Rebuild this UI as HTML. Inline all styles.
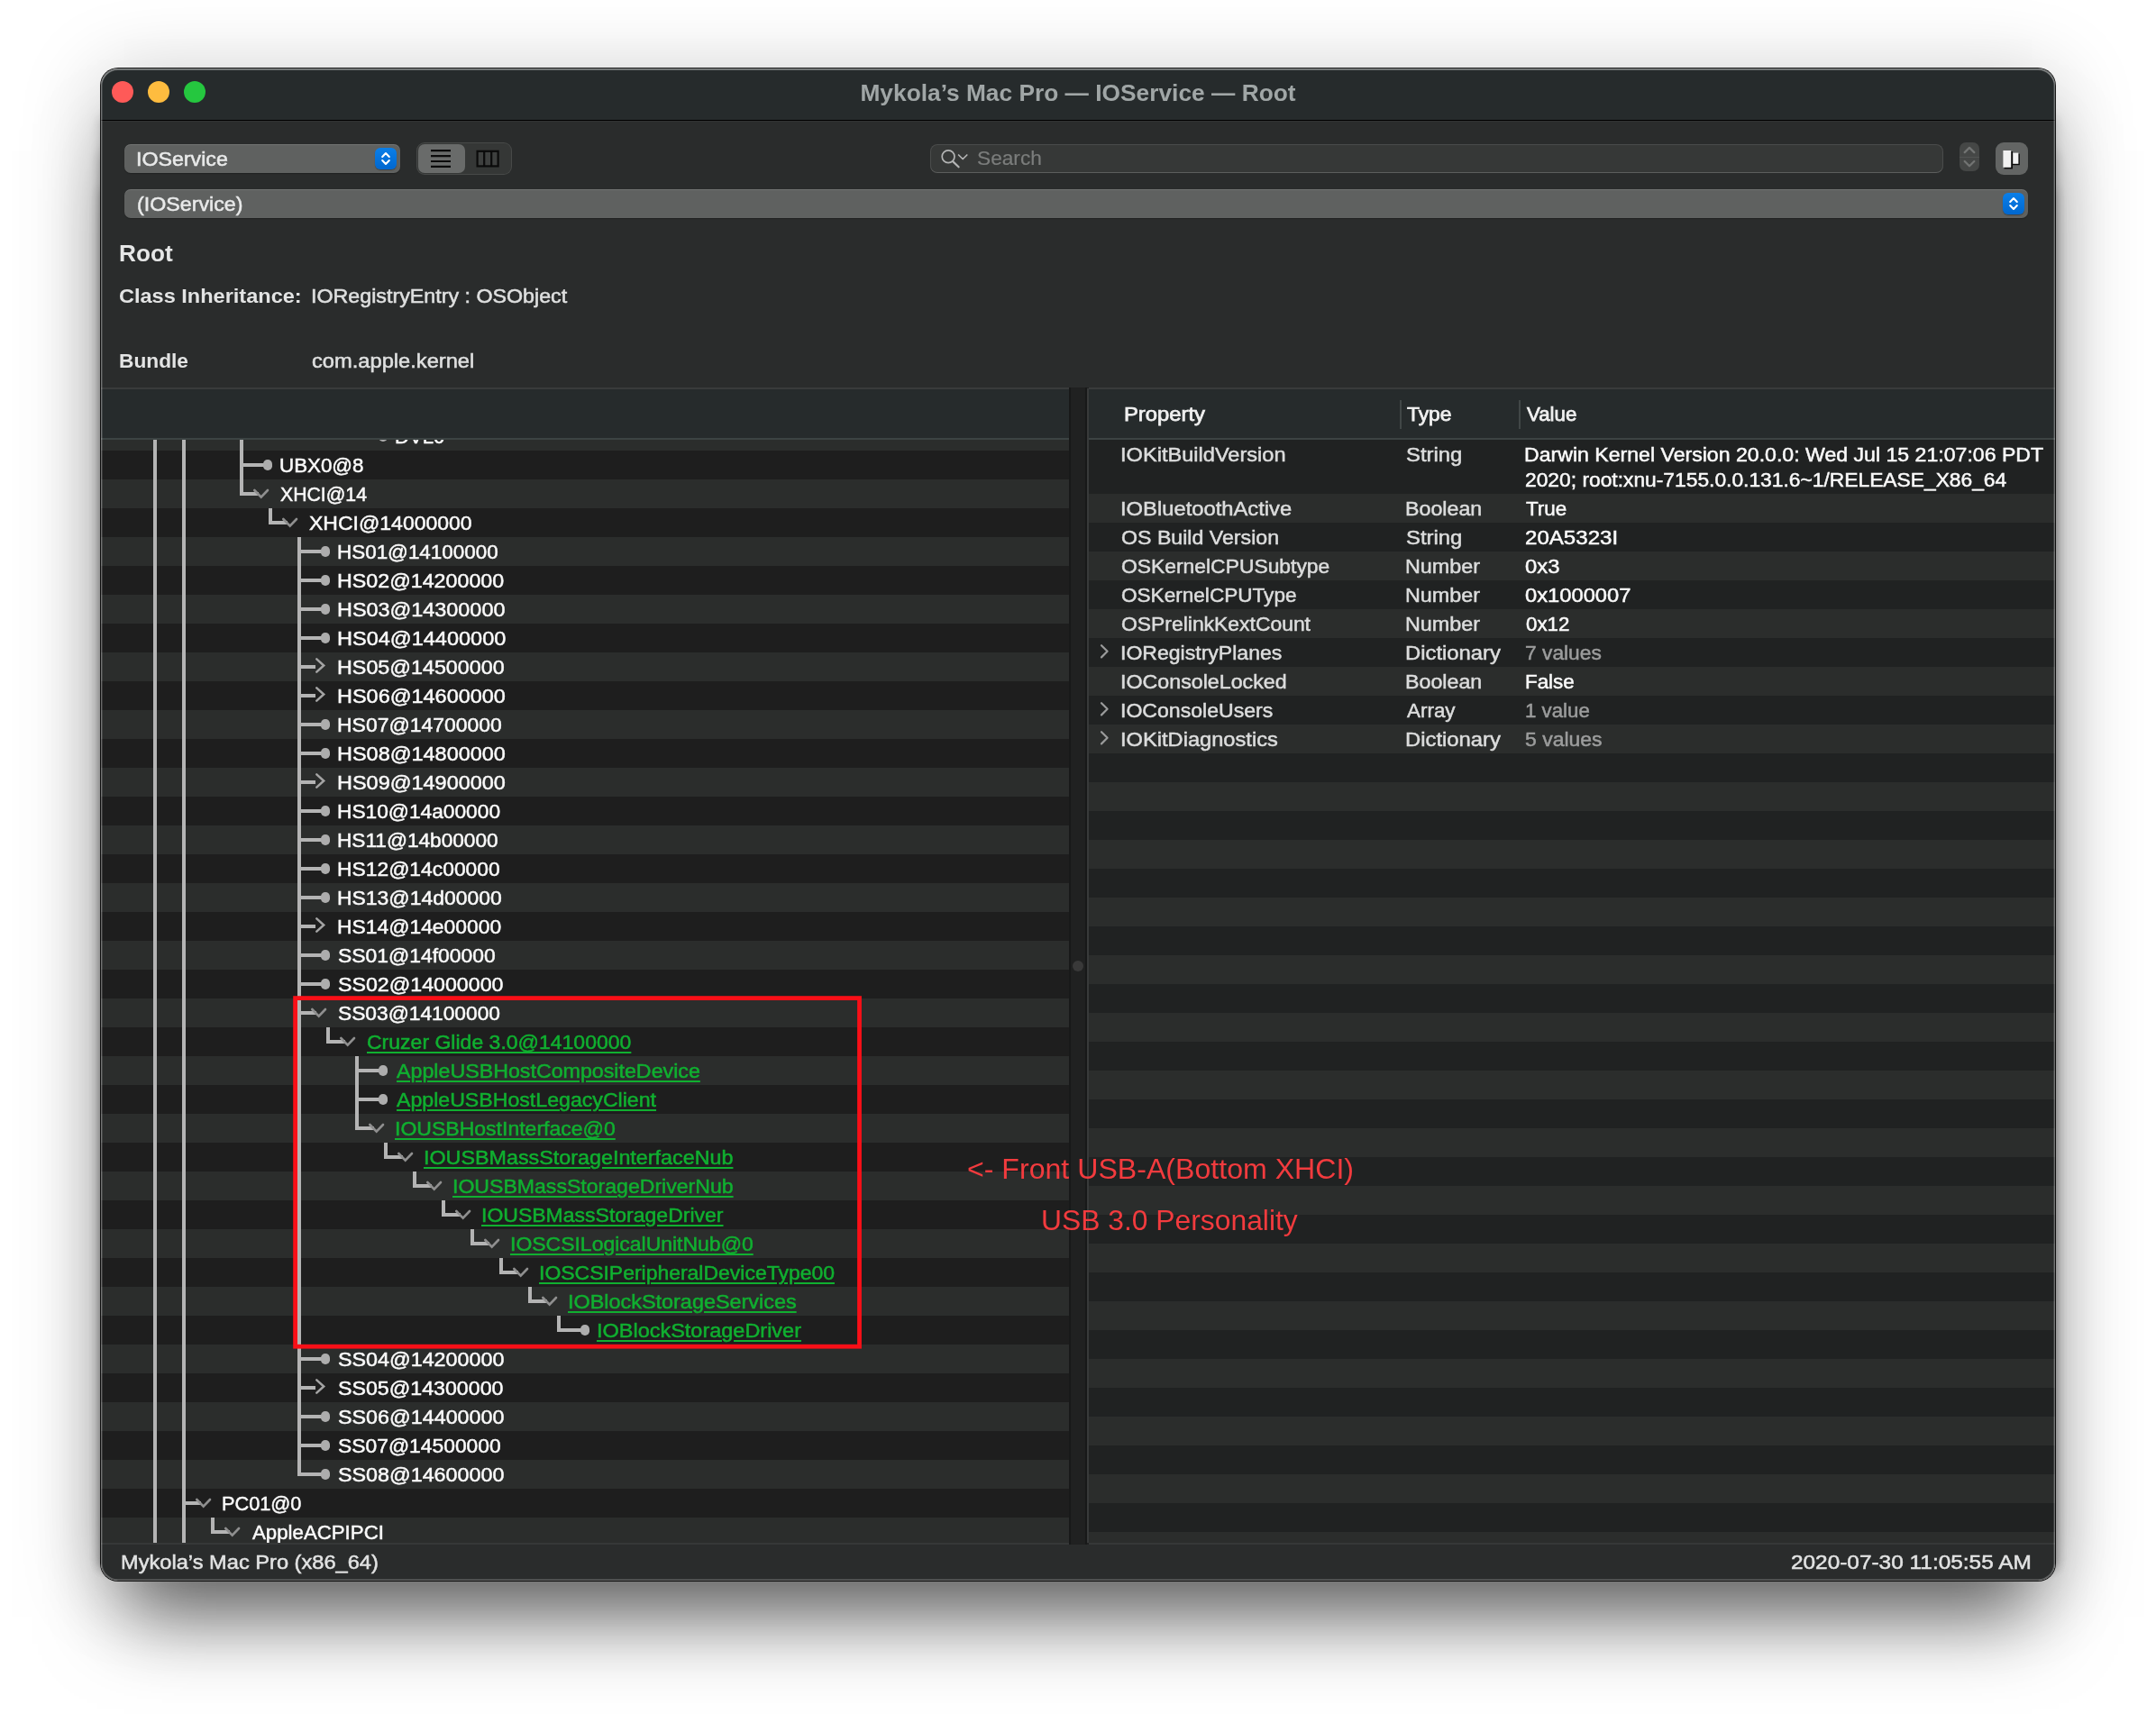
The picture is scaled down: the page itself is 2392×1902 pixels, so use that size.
<!DOCTYPE html><html lang="en"><head><meta charset="utf-8"><title>Mykola’s Mac Pro — IOService — Root</title><style>
*{box-sizing:border-box;margin:0;padding:0}
html,body{width:2392px;height:1902px;background:#fff;overflow:hidden}
body{position:relative;font-family:"Liberation Sans", Arial, Helvetica, sans-serif;color:#e4e5e5;font-size:22px}
.a{position:absolute}
.t{position:absolute;white-space:nowrap;line-height:32px;height:32px;transform-origin:0 50%;-webkit-text-stroke:.5px currentColor}
#shadow{position:absolute;left:112px;top:76px;width:2168px;height:1678px;border-radius:19px;
 box-shadow:0 0 0 1px rgba(0,0,0,.9),0 66px 84px -26px rgba(0,0,0,.565),0 10px 90px rgba(0,0,0,.22)}
#win{position:absolute;left:112px;top:76px;width:2168px;height:1678px;border-radius:19px;overflow:hidden;background:#2a2c2c}
#c{position:absolute;left:-112px;top:-76px;width:2392px;height:1902px;will-change:transform}
#rim{position:absolute;left:112px;top:76px;width:2168px;height:1678px;border-radius:19px;
 box-shadow:inset 0 0 0 1.5px rgba(255,255,255,.26), inset 0 1.5px 0 0.5px rgba(255,255,255,.22)}
.ln{position:absolute;background:#b4b4b4}
.dot{position:absolute;width:10.4px;height:11.6px;border-radius:4.8px;background:#adadad}
.g{color:#10b030;text-decoration:underline;text-decoration-thickness:2.2px;text-underline-offset:2.6px}
.rowd{position:absolute;height:32px}
svg{position:absolute;overflow:visible}
</style></head><body>
<div id="shadow"></div>
<div class="a" style="left:112px;top:130px;width:2168px;height:1610px;box-shadow:0 0 12px rgba(0,0,0,.2)"></div>
<div class="a" style="left:112px;top:170px;width:2168px;height:1570px;box-shadow:0 0 12px rgba(0,0,0,.2)"></div>
<div class="a" style="left:112px;top:210px;width:2168px;height:1530px;box-shadow:0 0 12px rgba(0,0,0,.2)"></div>
<div id="win"><div id="c">
<div class="a" style="left:112px;top:76px;width:2168px;height:57px;background:#262b2c"></div>
<div class="a" style="left:112px;top:132.8px;width:2168px;height:1.4px;background:#000"></div>
<div class="a" style="left:112px;top:134.2px;width:2168px;height:1px;background:#303232"></div>
<div class="a" style="left:124px;top:90px;width:24px;height:24px;border-radius:50%;background:#fe5a58"></div>
<div class="a" style="left:164px;top:90px;width:24px;height:24px;border-radius:50%;background:#febc3f"></div>
<div class="a" style="left:204px;top:90px;width:24px;height:24px;border-radius:50%;background:#25c73f"></div>
<div class="t" style="left:112.0px;top:86.99px;font-size:26px;font-weight:bold;color:#a0a6a6;transform:scaleX(1.0122);width:2168px;text-align:center;transform-origin:50% 50%;-webkit-text-stroke:0;">Mykola’s Mac Pro — IOService — Root</div>
<div class="a" style="left:138px;top:160px;width:306px;height:32px;border-radius:7px;background:#5f6160;box-shadow:inset 0 1px 0 rgba(255,255,255,.12),0 1px 1px rgba(0,0,0,.25)"></div>
<div class="t" style="left:151.3px;top:160.78px;color:#e9eaea;transform:scaleX(1.0542);">IOService</div>
<div class="a" style="left:416px;top:164px;width:24px;height:24px;border-radius:6px;background:linear-gradient(#0b7fe8,#0067cf);box-shadow:0 1px 1px rgba(0,0,0,.3)"></div>
<svg style="left:416px;top:164px" width="24" height="24" viewBox="0 0 24 24"><path d="M8.2 9.9L12 6.1L15.8 9.9M8.2 14.1L12 17.9L15.8 14.1" fill="none" stroke="#fff" stroke-width="2.1" stroke-linecap="round" stroke-linejoin="round"/></svg>
<div class="a" style="left:138px;top:210px;width:2112px;height:32px;border-radius:7px;background:#5f6160;box-shadow:inset 0 1px 0 rgba(255,255,255,.12),0 1px 1px rgba(0,0,0,.25)"></div>
<div class="t" style="left:152.0px;top:210.78px;color:#e9eaea;transform:scaleX(1.0555);">(IOService)</div>
<div class="a" style="left:2222px;top:214px;width:24px;height:24px;border-radius:6px;background:linear-gradient(#0b7fe8,#0067cf);box-shadow:0 1px 1px rgba(0,0,0,.3)"></div>
<svg style="left:2222px;top:214px" width="24" height="24" viewBox="0 0 24 24"><path d="M8.2 9.9L12 6.1L15.8 9.9M8.2 14.1L12 17.9L15.8 14.1" fill="none" stroke="#fff" stroke-width="2.1" stroke-linecap="round" stroke-linejoin="round"/></svg>
<div class="a" style="left:462px;top:158px;width:106px;height:36px;border-radius:9px;background:#353736;box-shadow:inset 0 0 0 1px rgba(255,255,255,.09)"></div>
<div class="a" style="left:464px;top:160px;width:52px;height:32px;border-radius:7px;background:#696b6a"></div>
<svg style="left:462px;top:158px" width="106" height="36" viewBox="0 0 106 36"><g stroke="#0b0b0b" stroke-width="2.2" fill="none"><path d="M16 9.2H38M16 15.1H38M16 21H38M16 26.9H38"/><rect x="67.6" y="9.8" width="23" height="16.6" fill="#3e403f"/><path d="M75.2 9.8V26.4M83.2 9.8V26.4"/></g></svg>
<div class="a" style="left:1032px;top:160px;width:1124px;height:32px;border-radius:8px;background:#363837;box-shadow:inset 0 0 0 1px rgba(255,255,255,.10),inset 0 -1px 0 rgba(255,255,255,.10)"></div>
<svg style="left:1032px;top:160px" width="60" height="32" viewBox="0 0 60 32"><g fill="none" stroke="#b3b4b4" stroke-width="1.7" stroke-linecap="round" stroke-linejoin="round"><circle cx="20.1" cy="13.7" r="6.9"/><path d="M25.4 19.4L31.6 25.3" stroke-width="2.2"/><path d="M31.6 12L36.2 16.5L40.8 12"/></g></svg>
<div class="t" style="left:1084.4px;top:160.38px;color:#7b7d7c;transform:scaleX(1.0311);-webkit-text-stroke:.2px currentColor;">Search</div>
<div class="a" style="left:2174px;top:158px;width:22px;height:32px;border-radius:7px;background:#454746"></div>
<div class="a" style="left:2174px;top:173.5px;width:22px;height:1.5px;background:#525453"></div>
<svg style="left:2174px;top:158px" width="22" height="32" viewBox="0 0 22 32"><path d="M5.7 11.1L11 5.9L16.3 11.1M5.7 21L11 26.2L16.3 21" fill="none" stroke="#727473" stroke-width="2.3" stroke-linecap="round" stroke-linejoin="round"/></svg>
<div class="a" style="left:2214px;top:158px;width:36px;height:36px;border-radius:9px;background:#636564"></div>
<svg style="left:2214px;top:158px" width="36" height="36" viewBox="0 0 36 36"><rect x="9.6" y="10" width="9.4" height="19.4" fill="#0a0a0a"/><rect x="19" y="12.6" width="7.8" height="12.6" fill="#0a0a0a"/><rect x="8.4" y="9" width="8.8" height="18.8" fill="#f1f1f1"/><rect x="19.2" y="11.6" width="6.2" height="12.2" fill="#f1f1f1"/></svg>
<div class="t" style="left:131.5px;top:264.79px;font-size:26px;font-weight:bold;color:#e6e7e7;transform:scaleX(1.0070);-webkit-text-stroke:0;">Root</div>
<div class="t" style="left:132.3px;top:313.08px;font-weight:bold;color:#e3e4e4;transform:scaleX(1.0694);-webkit-text-stroke:0;">Class Inheritance:</div>
<div class="t" style="left:345.0px;top:312.88px;color:#dfe0e0;transform:scaleX(1.0564);">IORegistryEntry : OSObject</div>
<div class="t" style="left:131.8px;top:385.08px;font-weight:bold;color:#e3e4e4;transform:scaleX(1.0319);-webkit-text-stroke:0;">Bundle</div>
<div class="t" style="left:346.1px;top:384.88px;color:#dfe0e0;transform:scaleX(1.0761);">com.apple.kernel</div>
<div class="a" style="left:112px;top:430px;width:2168px;height:2px;background:#393b3b"></div>
<div class="a" style="left:112px;top:432px;width:1074px;height:1280px;background:#1e1e1e;overflow:hidden"><div class="a" style="left:-112px;top:-432px;width:2392px;height:1902px">
<div class="rowd" style="left:112px;top:468px;width:1074px;background:#2b2d2c"></div>
<div class="rowd" style="left:112px;top:532px;width:1074px;background:#2b2d2c"></div>
<div class="rowd" style="left:112px;top:596px;width:1074px;background:#2b2d2c"></div>
<div class="rowd" style="left:112px;top:660px;width:1074px;background:#2b2d2c"></div>
<div class="rowd" style="left:112px;top:724px;width:1074px;background:#2b2d2c"></div>
<div class="rowd" style="left:112px;top:788px;width:1074px;background:#2b2d2c"></div>
<div class="rowd" style="left:112px;top:852px;width:1074px;background:#2b2d2c"></div>
<div class="rowd" style="left:112px;top:916px;width:1074px;background:#2b2d2c"></div>
<div class="rowd" style="left:112px;top:980px;width:1074px;background:#2b2d2c"></div>
<div class="rowd" style="left:112px;top:1044px;width:1074px;background:#2b2d2c"></div>
<div class="rowd" style="left:112px;top:1108px;width:1074px;background:#2b2d2c"></div>
<div class="rowd" style="left:112px;top:1172px;width:1074px;background:#2b2d2c"></div>
<div class="rowd" style="left:112px;top:1236px;width:1074px;background:#2b2d2c"></div>
<div class="rowd" style="left:112px;top:1300px;width:1074px;background:#2b2d2c"></div>
<div class="rowd" style="left:112px;top:1364px;width:1074px;background:#2b2d2c"></div>
<div class="rowd" style="left:112px;top:1428px;width:1074px;background:#2b2d2c"></div>
<div class="rowd" style="left:112px;top:1492px;width:1074px;background:#2b2d2c"></div>
<div class="rowd" style="left:112px;top:1556px;width:1074px;background:#2b2d2c"></div>
<div class="rowd" style="left:112px;top:1620px;width:1074px;background:#2b2d2c"></div>
<div class="rowd" style="left:112px;top:1684px;width:1074px;background:#2b2d2c"></div>
<div class="ln" style="left:170px;top:432px;width:4px;height:1280px"></div>
<div class="ln" style="left:202px;top:432px;width:4px;height:1280px"></div>
<div class="ln" style="left:266px;top:432px;width:4px;height:118px"></div>
<div class="ln" style="left:330px;top:596px;width:4px;height:1042px"></div>
<div class="ln" style="left:394px;top:1172px;width:4px;height:82px"></div>
<div class="ln" style="left:394px;top:482px;width:29.69999999999999px;height:4px"></div>
<div class="dot" style="left:419.8px;top:478.2px"></div>
<div class="t" style="left:437.9px;top:469.08px;color:#fafafa;transform:scaleX(1.0025);">DVL0</div>
<div class="ln" style="left:266px;top:514px;width:29.69999999999999px;height:4px"></div>
<div class="dot" style="left:291.8px;top:510.2px"></div>
<div class="t" style="left:310.0px;top:501.08px;color:#fafafa;transform:scaleX(1.0152);">UBX0@8</div>
<div class="ln" style="left:266px;top:546px;width:21.19999999999999px;height:4px"></div>
<svg style="left:276.7px;top:532px" width="24" height="32" viewBox="0 0 24 32"><path d="M5.3 12L12.7 19.7L20 12" fill="none" stroke="#8f8f8f" stroke-width="2.6" stroke-linecap="round" stroke-linejoin="miter"/></svg>
<div class="t" style="left:311.1px;top:533.08px;color:#fafafa;transform:scaleX(0.9661);">XHCI@14</div>
<div class="ln" style="left:298px;top:564px;width:4px;height:18px"></div>
<div class="ln" style="left:298px;top:578px;width:21.19999999999999px;height:4px"></div>
<svg style="left:308.7px;top:564px" width="24" height="32" viewBox="0 0 24 32"><path d="M5.3 12L12.7 19.7L20 12" fill="none" stroke="#8f8f8f" stroke-width="2.6" stroke-linecap="round" stroke-linejoin="miter"/></svg>
<div class="t" style="left:343.1px;top:565.08px;color:#fafafa;transform:scaleX(1.0455);">XHCI@14000000</div>
<div class="ln" style="left:330px;top:610px;width:29.69999999999999px;height:4px"></div>
<div class="dot" style="left:355.8px;top:606.2px"></div>
<div class="t" style="left:373.9px;top:597.08px;color:#fafafa;transform:scaleX(1.0197);">HS01@14100000</div>
<div class="ln" style="left:330px;top:642px;width:29.69999999999999px;height:4px"></div>
<div class="dot" style="left:355.8px;top:638.2px"></div>
<div class="t" style="left:373.8px;top:629.08px;color:#fafafa;transform:scaleX(1.0567);">HS02@14200000</div>
<div class="ln" style="left:330px;top:674px;width:29.69999999999999px;height:4px"></div>
<div class="dot" style="left:355.8px;top:670.2px"></div>
<div class="t" style="left:373.8px;top:661.08px;color:#fafafa;transform:scaleX(1.0637);">HS03@14300000</div>
<div class="ln" style="left:330px;top:706px;width:29.69999999999999px;height:4px"></div>
<div class="dot" style="left:355.8px;top:702.2px"></div>
<div class="t" style="left:373.8px;top:693.08px;color:#fafafa;transform:scaleX(1.0689);">HS04@14400000</div>
<div class="ln" style="left:330px;top:738px;width:20.0px;height:4px"></div>
<svg style="left:344.7px;top:724px" width="20" height="32" viewBox="0 0 20 32"><path d="M6.3 7.4L14.2 14.5L6.3 21.6" fill="none" stroke="#a4a4a4" stroke-width="2.5" stroke-linecap="round" stroke-linejoin="miter"/></svg>
<div class="t" style="left:373.8px;top:725.08px;color:#fafafa;transform:scaleX(1.0596);">HS05@14500000</div>
<div class="ln" style="left:330px;top:770px;width:20.0px;height:4px"></div>
<svg style="left:344.7px;top:756px" width="20" height="32" viewBox="0 0 20 32"><path d="M6.3 7.4L14.2 14.5L6.3 21.6" fill="none" stroke="#a4a4a4" stroke-width="2.5" stroke-linecap="round" stroke-linejoin="miter"/></svg>
<div class="t" style="left:373.8px;top:757.08px;color:#fafafa;transform:scaleX(1.0666);">HS06@14600000</div>
<div class="ln" style="left:330px;top:802px;width:29.69999999999999px;height:4px"></div>
<div class="dot" style="left:355.8px;top:798.2px"></div>
<div class="t" style="left:373.8px;top:789.08px;color:#fafafa;transform:scaleX(1.0434);">HS07@14700000</div>
<div class="ln" style="left:330px;top:834px;width:29.69999999999999px;height:4px"></div>
<div class="dot" style="left:355.8px;top:830.2px"></div>
<div class="t" style="left:373.8px;top:821.08px;color:#fafafa;transform:scaleX(1.0666);">HS08@14800000</div>
<div class="ln" style="left:330px;top:866px;width:20.0px;height:4px"></div>
<svg style="left:344.7px;top:852px" width="20" height="32" viewBox="0 0 20 32"><path d="M6.3 7.4L14.2 14.5L6.3 21.6" fill="none" stroke="#a4a4a4" stroke-width="2.5" stroke-linecap="round" stroke-linejoin="miter"/></svg>
<div class="t" style="left:373.8px;top:853.08px;color:#fafafa;transform:scaleX(1.0666);">HS09@14900000</div>
<div class="ln" style="left:330px;top:898px;width:29.69999999999999px;height:4px"></div>
<div class="dot" style="left:355.8px;top:894.2px"></div>
<div class="t" style="left:373.8px;top:885.08px;color:#fafafa;transform:scaleX(1.0330);">HS10@14a00000</div>
<div class="ln" style="left:330px;top:930px;width:29.69999999999999px;height:4px"></div>
<div class="dot" style="left:355.8px;top:926.2px"></div>
<div class="t" style="left:373.8px;top:917.08px;color:#fafafa;transform:scaleX(1.0289);">HS11@14b00000</div>
<div class="ln" style="left:330px;top:962px;width:29.69999999999999px;height:4px"></div>
<div class="dot" style="left:355.8px;top:958.2px"></div>
<div class="t" style="left:373.8px;top:949.08px;color:#fafafa;transform:scaleX(1.0385);">HS12@14c00000</div>
<div class="ln" style="left:330px;top:994px;width:29.69999999999999px;height:4px"></div>
<div class="dot" style="left:355.8px;top:990.2px"></div>
<div class="t" style="left:373.8px;top:981.08px;color:#fafafa;transform:scaleX(1.0423);">HS13@14d00000</div>
<div class="ln" style="left:330px;top:1026px;width:20.0px;height:4px"></div>
<svg style="left:344.7px;top:1012px" width="20" height="32" viewBox="0 0 20 32"><path d="M6.3 7.4L14.2 14.5L6.3 21.6" fill="none" stroke="#a4a4a4" stroke-width="2.5" stroke-linecap="round" stroke-linejoin="miter"/></svg>
<div class="t" style="left:373.8px;top:1013.08px;color:#fafafa;transform:scaleX(1.0394);">HS14@14e00000</div>
<div class="ln" style="left:330px;top:1058px;width:29.69999999999999px;height:4px"></div>
<div class="dot" style="left:355.8px;top:1054.2px"></div>
<div class="t" style="left:374.6px;top:1045.08px;color:#fafafa;transform:scaleX(1.0403);">SS01@14f00000</div>
<div class="ln" style="left:330px;top:1090px;width:29.69999999999999px;height:4px"></div>
<div class="dot" style="left:355.8px;top:1086.2px"></div>
<div class="t" style="left:374.6px;top:1077.08px;color:#fafafa;transform:scaleX(1.0542);">SS02@14000000</div>
<div class="ln" style="left:330px;top:1122px;width:21.19999999999999px;height:4px"></div>
<svg style="left:340.7px;top:1108px" width="24" height="32" viewBox="0 0 24 32"><path d="M5.3 12L12.7 19.7L20 12" fill="none" stroke="#8f8f8f" stroke-width="2.6" stroke-linecap="round" stroke-linejoin="miter"/></svg>
<div class="t" style="left:374.6px;top:1109.08px;color:#fafafa;transform:scaleX(1.0339);">SS03@14100000</div>
<div class="ln" style="left:362px;top:1140px;width:4px;height:18px"></div>
<div class="ln" style="left:362px;top:1154px;width:21.19999999999999px;height:4px"></div>
<svg style="left:372.7px;top:1140px" width="24" height="32" viewBox="0 0 24 32"><path d="M5.3 12L12.7 19.7L20 12" fill="none" stroke="#8f8f8f" stroke-width="2.6" stroke-linecap="round" stroke-linejoin="miter"/></svg>
<div class="t g" style="left:406.5px;top:1141.08px;transform:scaleX(1.0462);">Cruzer Glide 3.0@14100000</div>
<div class="ln" style="left:394px;top:1186px;width:29.69999999999999px;height:4px"></div>
<div class="dot" style="left:419.8px;top:1182.2px"></div>
<div class="t g" style="left:439.6px;top:1173.08px;transform:scaleX(1.0555);">AppleUSBHostCompositeDevice</div>
<div class="ln" style="left:394px;top:1218px;width:29.69999999999999px;height:4px"></div>
<div class="dot" style="left:419.8px;top:1214.2px"></div>
<div class="t g" style="left:439.6px;top:1205.08px;transform:scaleX(1.0515);">AppleUSBHostLegacyClient</div>
<div class="ln" style="left:394px;top:1250px;width:21.19999999999999px;height:4px"></div>
<svg style="left:404.7px;top:1236px" width="24" height="32" viewBox="0 0 24 32"><path d="M5.3 12L12.7 19.7L20 12" fill="none" stroke="#8f8f8f" stroke-width="2.6" stroke-linecap="round" stroke-linejoin="miter"/></svg>
<div class="t g" style="left:437.6px;top:1237.08px;transform:scaleX(1.0467);">IOUSBHostInterface@0</div>
<div class="ln" style="left:426px;top:1268px;width:4px;height:18px"></div>
<div class="ln" style="left:426px;top:1282px;width:21.19999999999999px;height:4px"></div>
<svg style="left:436.7px;top:1268px" width="24" height="32" viewBox="0 0 24 32"><path d="M5.3 12L12.7 19.7L20 12" fill="none" stroke="#8f8f8f" stroke-width="2.6" stroke-linecap="round" stroke-linejoin="miter"/></svg>
<div class="t g" style="left:469.6px;top:1269.08px;transform:scaleX(1.0598);">IOUSBMassStorageInterfaceNub</div>
<div class="ln" style="left:458px;top:1300px;width:4px;height:18px"></div>
<div class="ln" style="left:458px;top:1314px;width:21.19999999999999px;height:4px"></div>
<svg style="left:468.7px;top:1300px" width="24" height="32" viewBox="0 0 24 32"><path d="M5.3 12L12.7 19.7L20 12" fill="none" stroke="#8f8f8f" stroke-width="2.6" stroke-linecap="round" stroke-linejoin="miter"/></svg>
<div class="t g" style="left:501.6px;top:1301.08px;transform:scaleX(1.0488);">IOUSBMassStorageDriverNub</div>
<div class="ln" style="left:490px;top:1332px;width:4px;height:18px"></div>
<div class="ln" style="left:490px;top:1346px;width:21.200000000000045px;height:4px"></div>
<svg style="left:500.7px;top:1332px" width="24" height="32" viewBox="0 0 24 32"><path d="M5.3 12L12.7 19.7L20 12" fill="none" stroke="#8f8f8f" stroke-width="2.6" stroke-linecap="round" stroke-linejoin="miter"/></svg>
<div class="t g" style="left:533.6px;top:1333.08px;transform:scaleX(1.0459);">IOUSBMassStorageDriver</div>
<div class="ln" style="left:522px;top:1364px;width:4px;height:18px"></div>
<div class="ln" style="left:522px;top:1378px;width:21.200000000000045px;height:4px"></div>
<svg style="left:532.7px;top:1364px" width="24" height="32" viewBox="0 0 24 32"><path d="M5.3 12L12.7 19.7L20 12" fill="none" stroke="#8f8f8f" stroke-width="2.6" stroke-linecap="round" stroke-linejoin="miter"/></svg>
<div class="t g" style="left:565.6px;top:1365.08px;transform:scaleX(1.0441);">IOSCSILogicalUnitNub@0</div>
<div class="ln" style="left:554px;top:1396px;width:4px;height:18px"></div>
<div class="ln" style="left:554px;top:1410px;width:21.200000000000045px;height:4px"></div>
<svg style="left:564.7px;top:1396px" width="24" height="32" viewBox="0 0 24 32"><path d="M5.3 12L12.7 19.7L20 12" fill="none" stroke="#8f8f8f" stroke-width="2.6" stroke-linecap="round" stroke-linejoin="miter"/></svg>
<div class="t g" style="left:597.6px;top:1397.08px;transform:scaleX(1.0436);">IOSCSIPeripheralDeviceType00</div>
<div class="ln" style="left:586px;top:1428px;width:4px;height:18px"></div>
<div class="ln" style="left:586px;top:1442px;width:21.200000000000045px;height:4px"></div>
<svg style="left:596.7px;top:1428px" width="24" height="32" viewBox="0 0 24 32"><path d="M5.3 12L12.7 19.7L20 12" fill="none" stroke="#8f8f8f" stroke-width="2.6" stroke-linecap="round" stroke-linejoin="miter"/></svg>
<div class="t g" style="left:629.5px;top:1429.08px;transform:scaleX(1.0639);">IOBlockStorageServices</div>
<div class="ln" style="left:618px;top:1460px;width:4px;height:18px"></div>
<div class="ln" style="left:618px;top:1474px;width:29.700000000000045px;height:4px"></div>
<div class="dot" style="left:643.8px;top:1470.2px"></div>
<div class="t g" style="left:661.5px;top:1461.08px;transform:scaleX(1.0669);">IOBlockStorageDriver</div>
<div class="ln" style="left:330px;top:1506px;width:29.69999999999999px;height:4px"></div>
<div class="dot" style="left:355.8px;top:1502.2px"></div>
<div class="t" style="left:374.6px;top:1493.08px;color:#fafafa;transform:scaleX(1.0594);">SS04@14200000</div>
<div class="ln" style="left:330px;top:1538px;width:20.0px;height:4px"></div>
<svg style="left:344.7px;top:1524px" width="20" height="32" viewBox="0 0 20 32"><path d="M6.3 7.4L14.2 14.5L6.3 21.6" fill="none" stroke="#a4a4a4" stroke-width="2.5" stroke-linecap="round" stroke-linejoin="miter"/></svg>
<div class="t" style="left:374.6px;top:1525.08px;color:#fafafa;transform:scaleX(1.0542);">SS05@14300000</div>
<div class="ln" style="left:330px;top:1570px;width:29.69999999999999px;height:4px"></div>
<div class="dot" style="left:355.8px;top:1566.2px"></div>
<div class="t" style="left:374.6px;top:1557.08px;color:#fafafa;transform:scaleX(1.0600);">SS06@14400000</div>
<div class="ln" style="left:330px;top:1602px;width:29.69999999999999px;height:4px"></div>
<div class="dot" style="left:355.8px;top:1598.2px"></div>
<div class="t" style="left:374.6px;top:1589.08px;color:#fafafa;transform:scaleX(1.0385);">SS07@14500000</div>
<div class="ln" style="left:330px;top:1634px;width:29.69999999999999px;height:4px"></div>
<div class="dot" style="left:355.8px;top:1630.2px"></div>
<div class="t" style="left:374.6px;top:1621.08px;color:#fafafa;transform:scaleX(1.0594);">SS08@14600000</div>
<div class="ln" style="left:202px;top:1666px;width:21.19999999999999px;height:4px"></div>
<svg style="left:212.7px;top:1652px" width="24" height="32" viewBox="0 0 24 32"><path d="M5.3 12L12.7 19.7L20 12" fill="none" stroke="#8f8f8f" stroke-width="2.6" stroke-linecap="round" stroke-linejoin="miter"/></svg>
<div class="t" style="left:245.9px;top:1653.08px;color:#fafafa;transform:scaleX(0.9872);">PC01@0</div>
<div class="ln" style="left:234px;top:1684px;width:4px;height:18px"></div>
<div class="ln" style="left:234px;top:1698px;width:21.19999999999999px;height:4px"></div>
<svg style="left:244.7px;top:1684px" width="24" height="32" viewBox="0 0 24 32"><path d="M5.3 12L12.7 19.7L20 12" fill="none" stroke="#8f8f8f" stroke-width="2.6" stroke-linecap="round" stroke-linejoin="miter"/></svg>
<div class="t" style="left:279.6px;top:1685.08px;color:#fafafa;transform:scaleX(1.0110);">AppleACPIPCI</div>
<div class="a" style="left:112px;top:432px;width:1074px;height:54px;background:#262b2c"></div>
<div class="a" style="left:112px;top:486px;width:1074px;height:2px;background:#3c4343"></div>
</div></div>
<div class="a" style="left:112px;top:1712px;width:2168px;height:2px;background:#363838"></div>
<div class="a" style="left:1186px;top:430px;width:22px;height:1284px;background:#202121"></div>
<div class="a" style="left:1186px;top:430px;width:2px;height:1284px;background:#181919"></div>
<div class="a" style="left:1203.5px;top:430px;width:2.5px;height:1284px;background:#181919"></div>
<div class="a" style="left:1206px;top:431px;width:2px;height:1281px;background:#383a3a"></div>
<div class="a" style="left:1190px;top:1066px;width:12px;height:12px;border-radius:50%;background:#393939"></div>
<div class="a" style="left:1208px;top:432px;width:1072px;height:1280px;background:#202222;overflow:hidden"><div class="a" style="left:-1208px;top:-432px;width:2392px;height:1902px">
<div class="rowd" style="left:1208px;top:548px;width:1072px;background:#2b2d2c"></div>
<div class="rowd" style="left:1208px;top:612px;width:1072px;background:#2b2d2c"></div>
<div class="rowd" style="left:1208px;top:676px;width:1072px;background:#2b2d2c"></div>
<div class="rowd" style="left:1208px;top:740px;width:1072px;background:#2b2d2c"></div>
<div class="rowd" style="left:1208px;top:804px;width:1072px;background:#2b2d2c"></div>
<div class="rowd" style="left:1208px;top:868px;width:1072px;background:#2b2d2c"></div>
<div class="rowd" style="left:1208px;top:932px;width:1072px;background:#2b2d2c"></div>
<div class="rowd" style="left:1208px;top:996px;width:1072px;background:#2b2d2c"></div>
<div class="rowd" style="left:1208px;top:1060px;width:1072px;background:#2b2d2c"></div>
<div class="rowd" style="left:1208px;top:1124px;width:1072px;background:#2b2d2c"></div>
<div class="rowd" style="left:1208px;top:1188px;width:1072px;background:#2b2d2c"></div>
<div class="rowd" style="left:1208px;top:1252px;width:1072px;background:#2b2d2c"></div>
<div class="rowd" style="left:1208px;top:1316px;width:1072px;background:#2b2d2c"></div>
<div class="rowd" style="left:1208px;top:1380px;width:1072px;background:#2b2d2c"></div>
<div class="rowd" style="left:1208px;top:1444px;width:1072px;background:#2b2d2c"></div>
<div class="rowd" style="left:1208px;top:1508px;width:1072px;background:#2b2d2c"></div>
<div class="rowd" style="left:1208px;top:1572px;width:1072px;background:#2b2d2c"></div>
<div class="rowd" style="left:1208px;top:1636px;width:1072px;background:#2b2d2c"></div>
<div class="rowd" style="left:1208px;top:1700px;width:1072px;background:#2b2d2c"></div>
<div class="a" style="left:1208px;top:432px;width:1072px;height:54px;background:#262b2c"></div>
<div class="a" style="left:1208px;top:486px;width:1072px;height:2px;background:#3c4343"></div>
<div class="a" style="left:1552.5px;top:444px;width:2px;height:32px;background:#414747"></div>
<div class="a" style="left:1684.5px;top:444px;width:2px;height:32px;background:#414747"></div>
<div class="t" style="left:1247.3px;top:444.18px;color:#f0f0f0;transform:scaleX(1.0811);-webkit-text-stroke:.75px currentColor;">Property</div>
<div class="t" style="left:1561.1px;top:444.18px;color:#f0f0f0;transform:scaleX(1.0387);-webkit-text-stroke:.75px currentColor;">Type</div>
<div class="t" style="left:1693.6px;top:444.18px;color:#f0f0f0;transform:scaleX(1.0118);-webkit-text-stroke:.75px currentColor;">Value</div>
<div class="t" style="left:1242.8px;top:488.98px;color:#dcdddd;transform:scaleX(1.0724);">IOKitBuildVersion</div>
<div class="t" style="left:1560.1px;top:488.98px;color:#dcdddd;transform:scaleX(1.0851);">String</div>
<div class="t" style="left:1691.0px;top:488.98px;color:#fafafa;transform:scaleX(1.0500);">Darwin Kernel Version 20.0.0: Wed Jul 15 21:07:06 PDT</div>
<div class="t" style="left:1691.7px;top:517.18px;color:#fafafa;transform:scaleX(1.0362);">2020; root:xnu-7155.0.0.131.6~1/RELEASE_X86_64</div>
<div class="t" style="left:1242.8px;top:548.98px;color:#dcdddd;transform:scaleX(1.0799);">IOBluetoothActive</div>
<div class="t" style="left:1559.3px;top:548.98px;color:#dcdddd;transform:scaleX(1.0561);">Boolean</div>
<div class="t" style="left:1692.9px;top:548.98px;color:#fafafa;transform:scaleX(1.0181);">True</div>
<div class="t" style="left:1243.9px;top:580.98px;color:#dcdddd;transform:scaleX(1.0525);">OS Build Version</div>
<div class="t" style="left:1560.1px;top:580.98px;color:#dcdddd;transform:scaleX(1.0851);">String</div>
<div class="t" style="left:1692.1px;top:580.98px;color:#fafafa;transform:scaleX(1.0946);">20A5323I</div>
<div class="t" style="left:1243.9px;top:612.98px;color:#dcdddd;transform:scaleX(1.0392);">OSKernelCPUSubtype</div>
<div class="t" style="left:1559.3px;top:612.98px;color:#dcdddd;transform:scaleX(1.0613);">Number</div>
<div class="t" style="left:1692.4px;top:612.98px;color:#fafafa;transform:scaleX(1.0814);">0x3</div>
<div class="t" style="left:1243.9px;top:644.98px;color:#dcdddd;transform:scaleX(1.0263);">OSKernelCPUType</div>
<div class="t" style="left:1559.3px;top:644.98px;color:#dcdddd;transform:scaleX(1.0613);">Number</div>
<div class="t" style="left:1692.4px;top:644.98px;color:#fafafa;transform:scaleX(1.0784);">0x1000007</div>
<div class="t" style="left:1243.9px;top:676.98px;color:#dcdddd;transform:scaleX(1.0407);">OSPrelinkKextCount</div>
<div class="t" style="left:1559.3px;top:676.98px;color:#dcdddd;transform:scaleX(1.0613);">Number</div>
<div class="t" style="left:1692.5px;top:676.98px;color:#fafafa;transform:scaleX(1.0120);">0x12</div>
<div class="t" style="left:1242.9px;top:708.98px;color:#dcdddd;transform:scaleX(1.0474);">IORegistryPlanes</div>
<div class="t" style="left:1559.2px;top:708.98px;color:#dcdddd;transform:scaleX(1.0830);">Dictionary</div>
<div class="t" style="left:1692.2px;top:708.98px;color:#9c9d9d;transform:scaleX(1.0352);">7 values</div>
<svg style="left:1216px;top:708px" width="20" height="32" viewBox="0 0 20 32"><path d="M6 8.2L12.6 14.8L6 21.4" fill="none" stroke="#9a9b9b" stroke-width="2.2" stroke-linecap="round" stroke-linejoin="round"/></svg>
<div class="t" style="left:1242.9px;top:740.98px;color:#dcdddd;transform:scaleX(1.0559);">IOConsoleLocked</div>
<div class="t" style="left:1559.3px;top:740.98px;color:#dcdddd;transform:scaleX(1.0561);">Boolean</div>
<div class="t" style="left:1691.6px;top:740.98px;color:#fafafa;transform:scaleX(1.0166);">False</div>
<div class="t" style="left:1242.9px;top:772.98px;color:#dcdddd;transform:scaleX(1.0484);">IOConsoleUsers</div>
<div class="t" style="left:1561.2px;top:772.98px;color:#dcdddd;transform:scaleX(1.0194);">Array</div>
<div class="t" style="left:1691.7px;top:772.98px;color:#9c9d9d;transform:scaleX(1.0114);">1 value</div>
<svg style="left:1216px;top:772px" width="20" height="32" viewBox="0 0 20 32"><path d="M6 8.2L12.6 14.8L6 21.4" fill="none" stroke="#9a9b9b" stroke-width="2.2" stroke-linecap="round" stroke-linejoin="round"/></svg>
<div class="t" style="left:1242.8px;top:804.98px;color:#dcdddd;transform:scaleX(1.0749);">IOKitDiagnostics</div>
<div class="t" style="left:1559.2px;top:804.98px;color:#dcdddd;transform:scaleX(1.0830);">Dictionary</div>
<div class="t" style="left:1692.4px;top:804.98px;color:#9c9d9d;transform:scaleX(1.0436);">5 values</div>
<svg style="left:1216px;top:804px" width="20" height="32" viewBox="0 0 20 32"><path d="M6 8.2L12.6 14.8L6 21.4" fill="none" stroke="#9a9b9b" stroke-width="2.2" stroke-linecap="round" stroke-linejoin="round"/></svg>
</div></div>
<div class="t" style="left:133.5px;top:1718.38px;color:#e2e3e3;transform:scaleX(1.0741);">Mykola’s Mac Pro (x86_64)</div>
<div class="t" style="left:1700.0px;top:1718.38px;color:#e2e3e3;transform:scaleX(1.1094);width:553.8px;text-align:right;transform-origin:100% 50%;">2020-07-30 11:05:55 AM</div>
<svg style="left:0;top:0" width="2392" height="1902" viewBox="0 0 2392 1902"><rect x="327.6" y="1107.6" width="625.9" height="386.6" fill="none" stroke="#f90f17" stroke-width="4.8"/></svg>
<div class="t" style="left:1072.6px;top:1278.61px;font-size:32px;color:#f23b3e;line-height:36px;height:auto;transform:scaleX(1.0033);-webkit-text-stroke:0;">&lt;- Front USB-A(Bottom XHCI)</div>
<div class="t" style="left:1154.5px;top:1336.21px;font-size:32px;color:#f23b3e;line-height:36px;height:auto;transform:scaleX(0.9944);-webkit-text-stroke:0;">USB 3.0 Personality</div>
</div></div><div id="rim"></div></body></html>
